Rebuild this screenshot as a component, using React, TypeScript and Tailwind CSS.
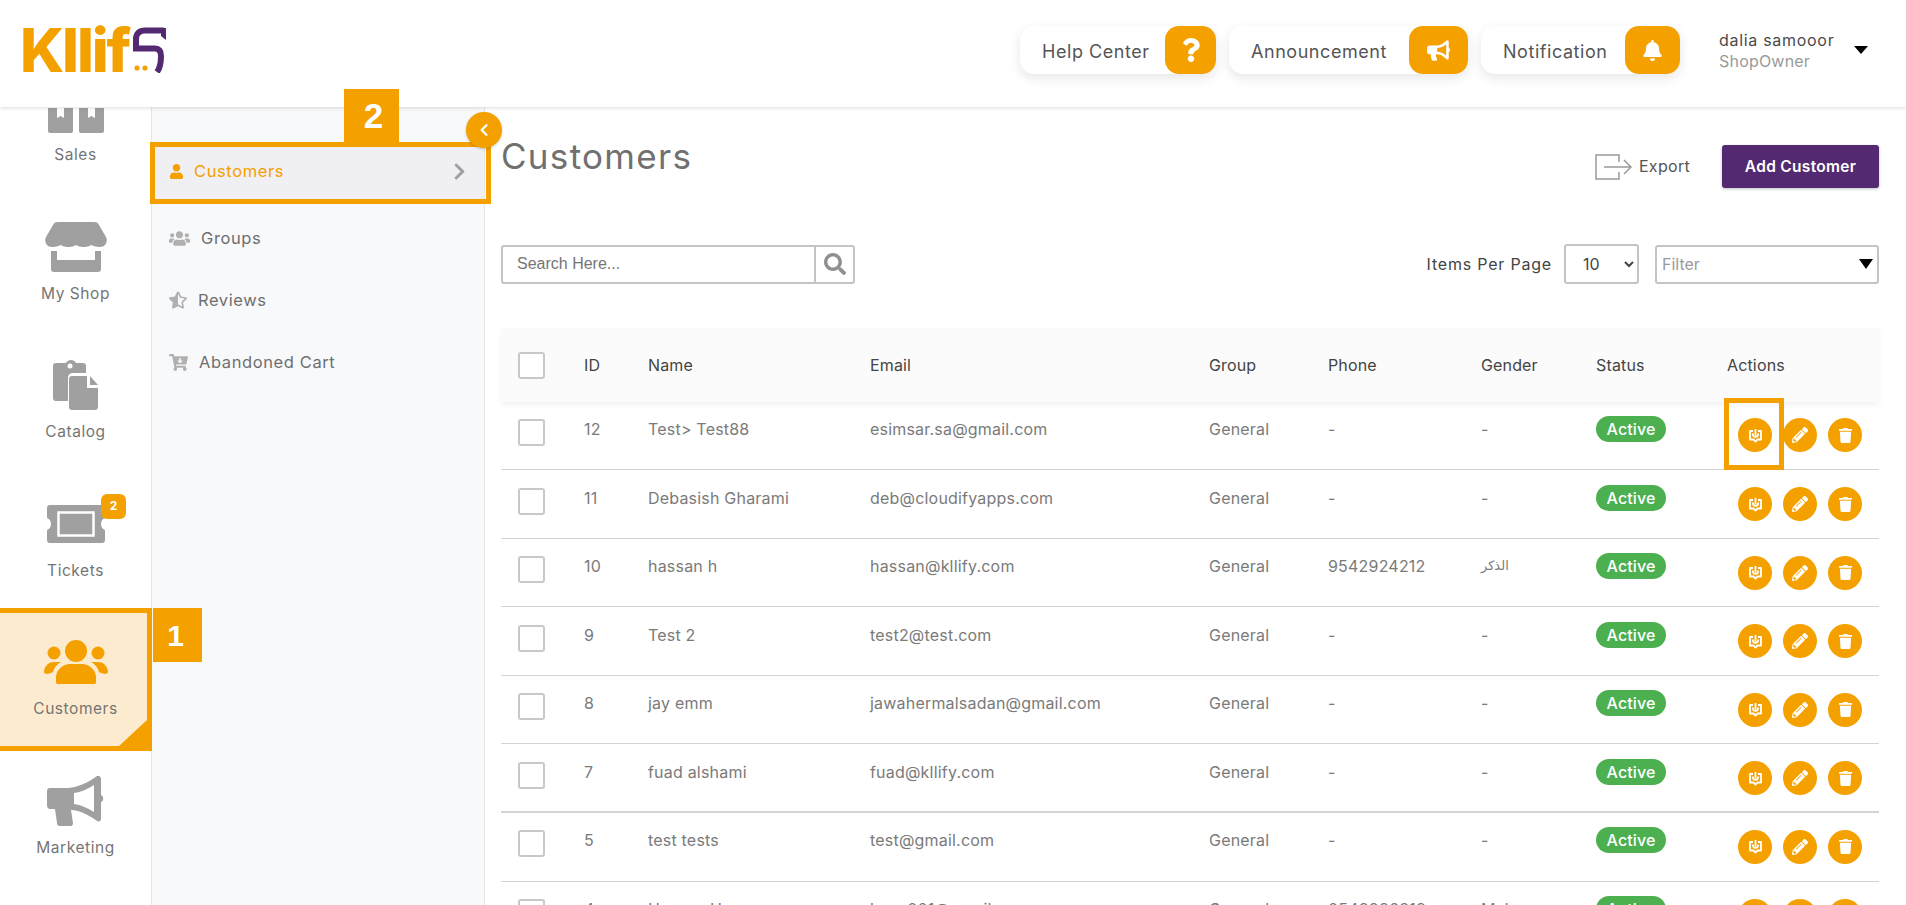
import React from 'react';
import { FaQuestion, FaBullhorn, FaBell, FaUser, FaUsers, FaStarHalfAlt, FaCartArrowDown, FaPencilAlt, FaTrash, FaChevronRight, FaChevronLeft, FaSearch } from 'react-icons/fa';

const font = '[font-family:Inter,"DejaVu_Sans",sans-serif]';

function Logo() {
  return (
    <div className="flex items-center w-[142px] h-[46px] relative -mt-[7px] -ml-[3px]">
      <span className="text-[#f4a100] font-extrabold text-[60px] leading-[46px] tracking-[-2.2px] [font-family:Inter,sans-serif]">Kllif</span>
      <svg width="36" height="46" viewBox="0 0 36 46" className="absolute left-[111px] top-0">
        <path d="M33 3.500H14C8 3.500 5 7 5 12V21.500H24C29 21.500 30 25 30 29C30 36 29 41 26 45" fill="none" stroke="#532a72" strokeWidth="6" />
        <path d="M30 1H35V13L30 9Z" fill="#532a72" />
        <circle cx="6" cy="41" r="2.600" fill="#f4a100" />
        <circle cx="14" cy="41" r="2.600" fill="#f4a100" />
      </svg>
    </div>
  );
}

function TopPill({ label, w, box, icon }: { label: string; w: string; box: string; icon: React.ReactNode }) {
  return (
    <div className={`flex items-center justify-between h-[48px] rounded-[14px] bg-white shadow-[0_4px_12px_rgba(0,0,0,0.1)] ${w}`}>
      <span className="pl-[22px] pt-[3px] text-[18px] tracking-[0.55px] text-[#555555] whitespace-nowrap">{label}</span>
      <span className={`flex items-center justify-center h-[48px] rounded-[14px] bg-[#f4a100] text-white ${box}`}>{icon}</span>
    </div>
  );
}

const G = '#a0a0a0';

function BoxesIcon() {
  return (
    <svg width="56" height="50" viewBox="0 0 56 50">
      <path d="M0 25H25V48a2 2 0 0 1-2 2H2a2 2 0 0 1-2-2Z" fill={G} />
      <path d="M31 25H56V48a2 2 0 0 1-2 2H33a2 2 0 0 1-2-2Z" fill={G} />
      <path d="M9 25H16V35L12.500 33L9 35Z" fill="#fff" />
      <path d="M40 25H47V35L43.500 33L40 35Z" fill="#fff" />
    </svg>
  );
}
function StoreIcon() {
  return (
    <svg width="62" height="50" viewBox="0 0 62 50">
      <path d="M13 0H49C52 0 53 1 54 3L61 15C63 19 61 25 55 25C51 25 49 24 46 23C43 25 40 25 38 25C35 25 33 24 31 23C29 24 27 25 24 25C22 25 19 25 16 23C13 24 11 25 7 25C1 25 -1 19 1 15L8 3C9 1 10 0 13 0Z" fill={G} />
      <path d="M6 29H12V38H50V29H56V47a3 3 0 0 1-3 3H9a3 3 0 0 1-3-3Z" fill={G} />
    </svg>
  );
}
function CatalogIcon() {
  return (
    <svg width="46" height="50" viewBox="0 0 46 50">
      <path d="M3 3H13C14 1 16 0 18 0C20 0 22 1 23 3H30C32 3 33 4 33 6V13H20C17 13 15 15 15 18V41H3C1 41 0 40 0 38V6C0 4 1 3 3 3Z" fill={G} />
      <circle cx="17" cy="6" r="2.500" fill="#fff" />
      <path d="M19 16H34V28H45V47C45 49 44 50 42 50H19C17 50 16 49 16 47V19C16 17 17 16 19 16Z" fill={G} />
      <path d="M37 16L45 25H37Z" fill={G} />
    </svg>
  );
}
function TicketIcon() {
  return (
    <svg width="58" height="38" viewBox="0 0 58 38">
      <path d="M3 0H55C57 0 58 1 58 3V13C55 14 54 16.500 54 19C54 21.500 55 24 58 25V35C58 37 57 38 55 38H3C1 38 0 37 0 35V25C3 24 4 21.500 4 19C4 16.500 3 14 0 13V3C0 1 1 0 3 0Z" fill={G} />
      <rect x="11.500" y="7.500" width="35" height="23" fill={G} stroke="#fff" strokeWidth="2.500" />
    </svg>
  );
}
function PeopleIcon() {
  return (
    <svg width="64" height="44" viewBox="0 0 64 44" fill="#f4a100">
      <circle cx="32" cy="11" r="11" />
      <circle cx="10" cy="13" r="6.500" />
      <circle cx="54" cy="13" r="6.500" />
      <path d="M14 44H50C52 44 52 43 52 41V37C52 30 45 24 38 24H26C19 24 12 30 12 37V41C12 43 12 44 14 44Z" />
      <path d="M0 32C0 27 4 22 10 22H17C13 24 10 28 9 32C6 34 0 35 0 32Z" />
      <path d="M64 32C64 27 60 22 54 22H47C51 24 54 28 55 32C58 34 64 35 64 32Z" />
    </svg>
  );
}
function MegaphoneIcon() {
  return (
    <svg width="58" height="50" viewBox="0 0 58 50">
      <path d="M3 12H20C30 12 42 6 50 0C52 -1 54 1 54 3V19C57 20 57 25 54 26V43C54 45 52 46 50 45C42 39 34 35 25 34H24L26 47C26 49 25 50 24 50H13C11 50 10 49 10 47L8 33H3C1 33 0 31 0 29V15C0 13 1 12 3 12Z" fill={G} />
      <path d="M27 17C34 16 41 13 47 9V36C41 32 34 29 27 28Z" fill="#fff" />
    </svg>
  );
}

function SideItem({ label, icon, active, badge }: { label: string; icon: React.ReactNode; active?: boolean; badge?: React.ReactNode }) {
  return (
    <div className="relative h-[138.5px] flex flex-col items-center pt-[28px]">
      {active && (
        <div className="absolute left-0 -right-[1px] -top-[1px] h-[143px] bg-[#fdebcf] border-y-[5px] border-r-[5px] border-[#f4a100]">
          <div className="absolute right-0 bottom-0 w-0 h-0 border-l-[28px] border-b-[26px] border-l-transparent border-b-[#f4a100]" />
        </div>
      )}
      <div className="relative h-[50px] flex items-center justify-center">{icon}</div>
      <span className="relative mt-[12px] text-[15.5px] leading-[20px] tracking-[0.55px] text-[#757575]">{label}</span>
      {badge}
    </div>
  );
}

function SubItem({ icon, label, gap }: { icon: React.ReactNode; label: string; gap: string }) {
  return (
    <div className={`flex items-center h-[62px] pl-[17px] ${gap} text-[16.5px] tracking-[0.6px] text-[#6f6f6f]`}>
      {icon}
      <span>{label}</span>
    </div>
  );
}

function Check() {
  return <div className="w-[27px] h-[27px] rounded-[3px] border-2 border-[#c8c8c8] bg-white" />;
}

function BoxArrow() {
  return (
    <svg width="15" height="15" viewBox="0 0 15 15" fill="none" stroke="#fff" strokeWidth="1.800">
      <path d="M5 3H2V11.500H5.500L7.500 13.500L9.500 11.500H13V3H10" strokeLinejoin="round" />
      <path d="M7.500 1V7.500" />
      <path d="M4.800 5.500C4.800 10 10.200 10 10.200 5.500" />
    </svg>
  );
}

function Circle({ children }: { children: React.ReactNode }) {
  return <span className="flex items-center justify-center w-[34px] h-[34px] rounded-full bg-[#f4a100] text-white">{children}</span>;
}

const rows = [
  ['12', 'Test> Test88', 'esimsar.sa@gmail.com', 'General', '-', '-'],
  ['11', 'Debasish Gharami', 'deb@cloudifyapps.com', 'General', '-', '-'],
  ['10', 'hassan h', 'hassan@kllify.com', 'General', '9542924212', 'الذكر'],
  ['9', 'Test 2', 'test2@test.com', 'General', '-', '-'],
  ['8', 'jay emm', 'jawahermalsadan@gmail.com', 'General', '-', '-'],
  ['7', 'fuad alshami', 'fuad@kllify.com', 'General', '-', '-'],
  ['5', 'test tests', 'test@gmail.com', 'General', '-', '-'],
  ['4', 'Hassan H', 'hans001@gmail.com', 'General', '0548886818', 'Male'],
];

const cols = 'grid grid-cols-[83px_64px_222px_339px_119px_153px_115px_131px_1fr]';

export default function App() {
  return (
    <div className={`h-screen overflow-hidden flex flex-col bg-white ${font}`}>
      <header className="relative z-20 h-[107px] shrink-0 bg-white shadow-[0_1px_4px_rgba(0,0,0,0.14)] flex items-center justify-between pl-[23px] pr-[38px]">
        <Logo />
        <div className="flex items-center h-[48px] -mt-[7px]">
          <div className="flex items-center gap-[13px]">
            <TopPill label="Help Center" w="w-[196px]" box="w-[51px]" icon={<FaQuestion size={24} />} />
            <TopPill label="Announcement" w="w-[239px]" box="w-[59px]" icon={<FaBullhorn size={23} />} />
            <TopPill label="Notification" w="w-[199px]" box="w-[55px]" icon={<FaBell size={21} />} />
          </div>
          <div className="ml-[39px] flex flex-col w-[126px] pt-[1px]">
            <span className="text-[16px] leading-[21px] tracking-[0.7px] text-[#4a4a4a] whitespace-nowrap">dalia samooor</span>
            <span className="text-[16px] leading-[21px] tracking-[0.2px] text-[#9a9a9a]">ShopOwner</span>
          </div>
          <span className="ml-[9px] w-0 h-0 border-x-[7px] border-t-[8px] border-x-transparent border-t-black" />
        </div>
      </header>

      <div className="flex flex-1 min-h-0">
        <aside className="w-[152px] shrink-0 border-r border-[#e6e6e6] -mt-[52px]">
          <SideItem label="Sales" icon={<BoxesIcon />} />
          <SideItem label="My Shop" icon={<StoreIcon />} />
          <SideItem label="Catalog" icon={<CatalogIcon />} />
          <SideItem
            label="Tickets"
            icon={<TicketIcon />}
            badge={<span className="absolute left-[101px] top-[23px] flex items-center justify-center w-[25px] h-[25px] rounded-[6px] bg-[#f4a100] text-white text-[12px] font-bold">2</span>}
          />
          <SideItem
            label="Customers"
            icon={<PeopleIcon />}
            active
            badge={<span className="absolute left-[153px] -top-[1px] z-10 flex items-center justify-center w-[49px] h-[54px] pr-[4px] bg-[#f4a100] text-white text-[30px] font-bold [font-family:'Liberation_Sans',sans-serif]">1</span>}
          />
          <SideItem label="Marketing" icon={<MegaphoneIcon />} />
        </aside>

        <nav className="relative w-[333px] shrink-0 bg-[#f8f9fb] border-r border-[#e6e6e6] pt-[40px]">
          <div className="flex items-center h-[52px] pb-[3px] pl-[17px] pr-[15px] gap-[10px] bg-[#f0eff4] text-[16.5px] tracking-[0.6px] text-[#f4a100]">
            <FaUser size={15} />
            <span className="flex-1">Customers</span>
            <FaChevronRight size={19} className="text-[#a0a0a0]" />
          </div>
          <div className="mt-[8px]">
            <SubItem icon={<FaUsers size={21} className="text-[#b0b0b0]" />} label="Groups" gap="gap-[11px]" />
            <SubItem icon={<FaStarHalfAlt size={18} className="text-[#b0b0b0]" />} label="Reviews" gap="gap-[11px]" />
            <SubItem icon={<FaCartArrowDown size={19} className="text-[#b0b0b0]" />} label="Abandoned Cart" gap="gap-[11px]" />
          </div>
          <div className="absolute -left-[2px] top-[35px] w-[341px] h-[62px] border-[5px] border-[#f4a100] z-10" />
          <span className="absolute left-[192px] -top-[18px] z-30 flex items-center justify-center w-[55px] h-[55px] pl-[4px] bg-[#f4a100] text-white text-[35px] font-bold [font-family:'Liberation_Sans',sans-serif]">2</span>
          <span className="absolute left-[314px] top-[5px] z-30 flex items-center justify-center w-[36px] h-[36px] rounded-full bg-[#f4a100] text-white shadow-[0_1px_3px_rgba(0,0,0,0.2)]"><FaChevronLeft size={14} /></span>
        </nav>

        <main className="flex-1 min-w-0 pl-[16px] pr-[27px] pt-[38px]">
          <div className="flex items-start justify-between h-[43px]">
            <h1 className="text-[35px] leading-[34px] -mt-[6px] tracking-[1.3px] text-[#707070]">Customers</h1>
            <div className="flex items-center">
              <svg width="37" height="26" viewBox="0 0 37 26" fill="none" stroke="#9a9a9a" strokeWidth="1.500">
                <path d="M24 8V1H1V25H24V18" />
                <path d="M9 13H35M29 6L36 13L29 20" />
              </svg>
              <span className="ml-[7px] -mt-[2px] text-[16px] tracking-[0.3px] text-[#555555]">Export</span>
              <button className="ml-[32px] w-[157px] h-[43px] rounded-[3px] bg-[#532a72] text-white text-[15.5px] font-semibold tracking-[0.3px] shadow-[0_1px_3px_rgba(0,0,0,0.25)]">Add Customer</button>
            </div>
          </div>

          <div className="mt-[56px] flex items-center justify-between h-[40px]">
            <div className="flex w-[354px] h-[39px] rounded-[3px] border-2 border-[#c4c4c4]">
              <input placeholder="Search Here..." className="flex-1 min-w-0 pl-[14px] border-r-2 border-[#c4c4c4] text-[16px] placeholder:text-[#757575] outline-none [font-family:'Liberation_Sans',sans-serif]" />
              <span className="flex items-center justify-center w-[37px] text-[#8f8f8f]"><FaSearch size={22} /></span>
            </div>
            <div className="flex items-center">
              <span className="text-[16px] tracking-[0.8px] text-[#444444] whitespace-nowrap">Items Per Page</span>
              <select defaultValue="10" className="ml-[12px] w-[75px] h-[40px] rounded-[3px] border-2 border-[#c4c4c4] pl-[13px] text-[16px] text-[#444444] bg-white">
                <option>10</option>
              </select>
              <div className="ml-[16px] w-[224px] h-[39px] rounded-[3px] border-2 border-[#c4c4c4] flex items-center justify-between pl-[5px] pr-[4px]">
                <span className="text-[16px] text-[#9a9a9a]">Filter</span>
                <span className="w-0 h-0 border-x-[7px] border-t-[10px] border-x-transparent border-t-black" />
              </div>
            </div>
          </div>

          <div className="mt-[44px]">
            <div className={`${cols} relative z-10 items-center h-[74px] -mb-[0.6px] bg-[#fbfbfb] shadow-[0_3px_5px_rgba(0,0,0,0.05)] text-[16px] tracking-[0.15px] text-[#444444]`}>
              <div className="pl-[17px]"><Check /></div>
              <span>ID</span>
              <span>Name</span>
              <span>Email</span>
              <span>Group</span>
              <span>Phone</span>
              <span>Gender</span>
              <span>Status</span>
              <span>Actions</span>
            </div>
            {rows.map((r, i) => (
              <div key={r[0]} className={`${cols} h-[68.6px] ${i === 5 ? 'border-b-2' : 'border-b'} border-[#d4d4d4] text-[16px] leading-[20px] tracking-[0.2px] text-[#7a7a7a]`}>
                <div className="pl-[17px] pt-[17.500px]"><Check /></div>
                <span className="pt-[17.500px]">{r[0]}</span>
                <span className="pt-[17.500px]">{r[1]}</span>
                <span className="pt-[17.500px]">{r[2]}</span>
                <span className="pt-[17.500px]">{r[3]}</span>
                <span className="pt-[17.500px]">{r[4]}</span>
                <span className={r[5] === 'الذكر' ? 'pt-[16px] text-[13px] tracking-normal' : 'pt-[17.500px]'}>{r[5]}</span>
                <div className="pt-[14.500px]">
                  <span className="flex items-center justify-center w-[70px] h-[26px] rounded-full bg-[#4caf50] text-white text-[16px] font-medium tracking-[0.1px]">Active</span>
                </div>
                <div className="relative pl-[11px] pt-[17px] flex items-start gap-[11px]">
                  <Circle><BoxArrow /></Circle>
                  <Circle><FaPencilAlt size={16} /></Circle>
                  <Circle><FaTrash size={15} /></Circle>
                  {i === 0 && <div className="absolute z-20 -left-[3px] -top-[3.400px] w-[60px] h-[72px] border-[5px] border-[#f4a100]" />}
                </div>
              </div>
            ))}
          </div>
        </main>
      </div>
    </div>
  );
}
